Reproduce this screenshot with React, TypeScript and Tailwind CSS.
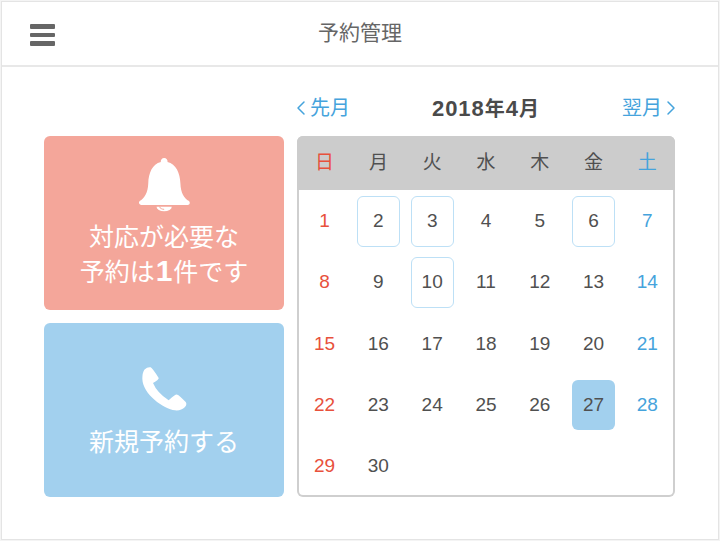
import { ChevronLeft, ChevronRight } from "lucide-react";

const weekdays = ["日", "月", "火", "水", "木", "金", "土"];
const days = Array.from({ length: 30 }, (_, i) => i + 1);
const outlined = [2, 3, 6, 10];

function dayColor(index: number) {
  if (index % 7 === 0) return "text-[#e8513c]";
  if (index % 7 === 6) return "text-[#45a3dc]";
  return "text-[#505050]";
}

function BellIcon() {
  return (
    <svg viewBox="293 82 160 164" className="w-[53px] h-[55px]">
      <path
        fill="#fff"
        d="M372 84a10 10 0 0 1 10 12C408 102 420 130 421 160C422 190 432 205 447 214Q453 222 444 226L302 226Q292 222 298 214C312 205 323 190 324 160C325 130 336 102 362 96A10 10 0 0 1 372 84Z"
      />
      <path fill="#fff" d="M349 231a23 14 0 0 0 46 0Z" />
      <path fill="none" stroke="#f4a69a" strokeWidth="3" d="M358 231c1 5 8 8 14 8" />
    </svg>
  );
}

function PhoneIcon() {
  return (
    <svg viewBox="305 140 135 135" className="w-[45px] h-[45px]">
      <path
        fill="#fff"
        d="M312 151Q322 142 331 144Q336 146 355 176Q356 180 338 191Q350 220 385 243Q405 224 411 226Q416 227 436 248Q441 255 434 263Q422 275 404 273C370 268 307 225 306 178Q306 160 312 151Z"
      />
    </svg>
  );
}

export default function App() {
  return (
    <div className="w-[720px] h-[541px] bg-[#f4f4f4] p-[1px] font-['Liberation_Sans','Noto_Sans_CJK_JP',sans-serif] overflow-hidden">
      <div className="h-full flex flex-col bg-white border border-[#e4e4e4]">
        <header className="relative h-[65px] shrink-0 flex items-center justify-center border-b-2 border-[#e8e8e8]">
          <div className="absolute left-[28px] top-[22px] w-[25px] flex flex-col gap-[4px]">
            <span className="h-[4.5px] rounded-[1px] bg-[#666]" />
            <span className="h-[4.5px] rounded-[1px] bg-[#666]" />
            <span className="h-[4.5px] rounded-[1px] bg-[#666]" />
          </div>
          <h1 className="text-[21px] text-[#666] font-normal -mt-[1px]">予約管理</h1>
        </header>

        <div className="pl-[42px] pt-[23px]">
          <div className="ml-[253px] w-[378px] h-[36px] flex items-center justify-between text-[#45a3dc] text-[20px]">
            <span className="flex items-center">
              <ChevronLeft className="w-[24px] h-[24px] -ml-[8px] -mr-[3px]" strokeWidth={1.5} />
              先月
            </span>
            <span className="text-[20px] font-bold text-[#4a4a4a] tracking-[1px]">
              <span className="text-[22px]">2018</span>年<span className="text-[22px]">4</span>月
            </span>
            <span className="flex items-center">
              翌月
              <ChevronRight className="w-[24px] h-[24px] -ml-[3px] -mr-[8px]" strokeWidth={1.5} />
            </span>
          </div>

          <div className="flex gap-[13px] mt-[10px]">
            <div className="w-[240px] flex flex-col gap-[13px] text-white">
              <div className="h-[174px] rounded-[6px] bg-[#f4a69a] flex flex-col items-center pt-[21px]">
                <BellIcon />
                <p className="mt-[8px] text-[25px] leading-[34px] text-center">
                  対応が必要な
                  <br />
                  予約は<span className="font-bold text-[30px] px-[1px]">1</span>件です
                </p>
              </div>
              <div className="h-[174px] rounded-[6px] bg-[#a2d0ee] flex flex-col items-center pt-[43px]">
                <PhoneIcon />
                <p className="mt-[14px] text-[25px] leading-[35px]">新規予約する</p>
              </div>
            </div>

            <div className="w-[378px] h-[361px] rounded-[6px] shadow-[inset_0_0_0_2px_#cfcfcf]">
              <div className="grid grid-cols-[repeat(7,53.8px)] pl-[0.7px] h-[54px] items-center rounded-t-[6px] bg-[#cccccc] text-[19px] text-center">
                {weekdays.map((w, i) => (
                  <span key={w} className={dayColor(i)}>
                    {w}
                  </span>
                ))}
              </div>
              <div className="grid grid-cols-[repeat(7,53.8px)] pl-[0.7px] auto-rows-[50.5px] gap-y-[10.8px] pt-[6px] text-[19px]">
                {days.map((d, i) => (
                  <div key={d} className="flex justify-center">
                    <div
                      className={`w-[43px] h-full flex items-center justify-center rounded-[6px] ${dayColor(i)} ${
                        outlined.includes(d) ? "border border-[#bde0f6]" : ""
                      } ${d === 27 ? "bg-[#a2d0ee]" : ""}`}
                    >
                      {d}
                    </div>
                  </div>
                ))}
              </div>
            </div>
          </div>
        </div>
      </div>
    </div>
  );
}
